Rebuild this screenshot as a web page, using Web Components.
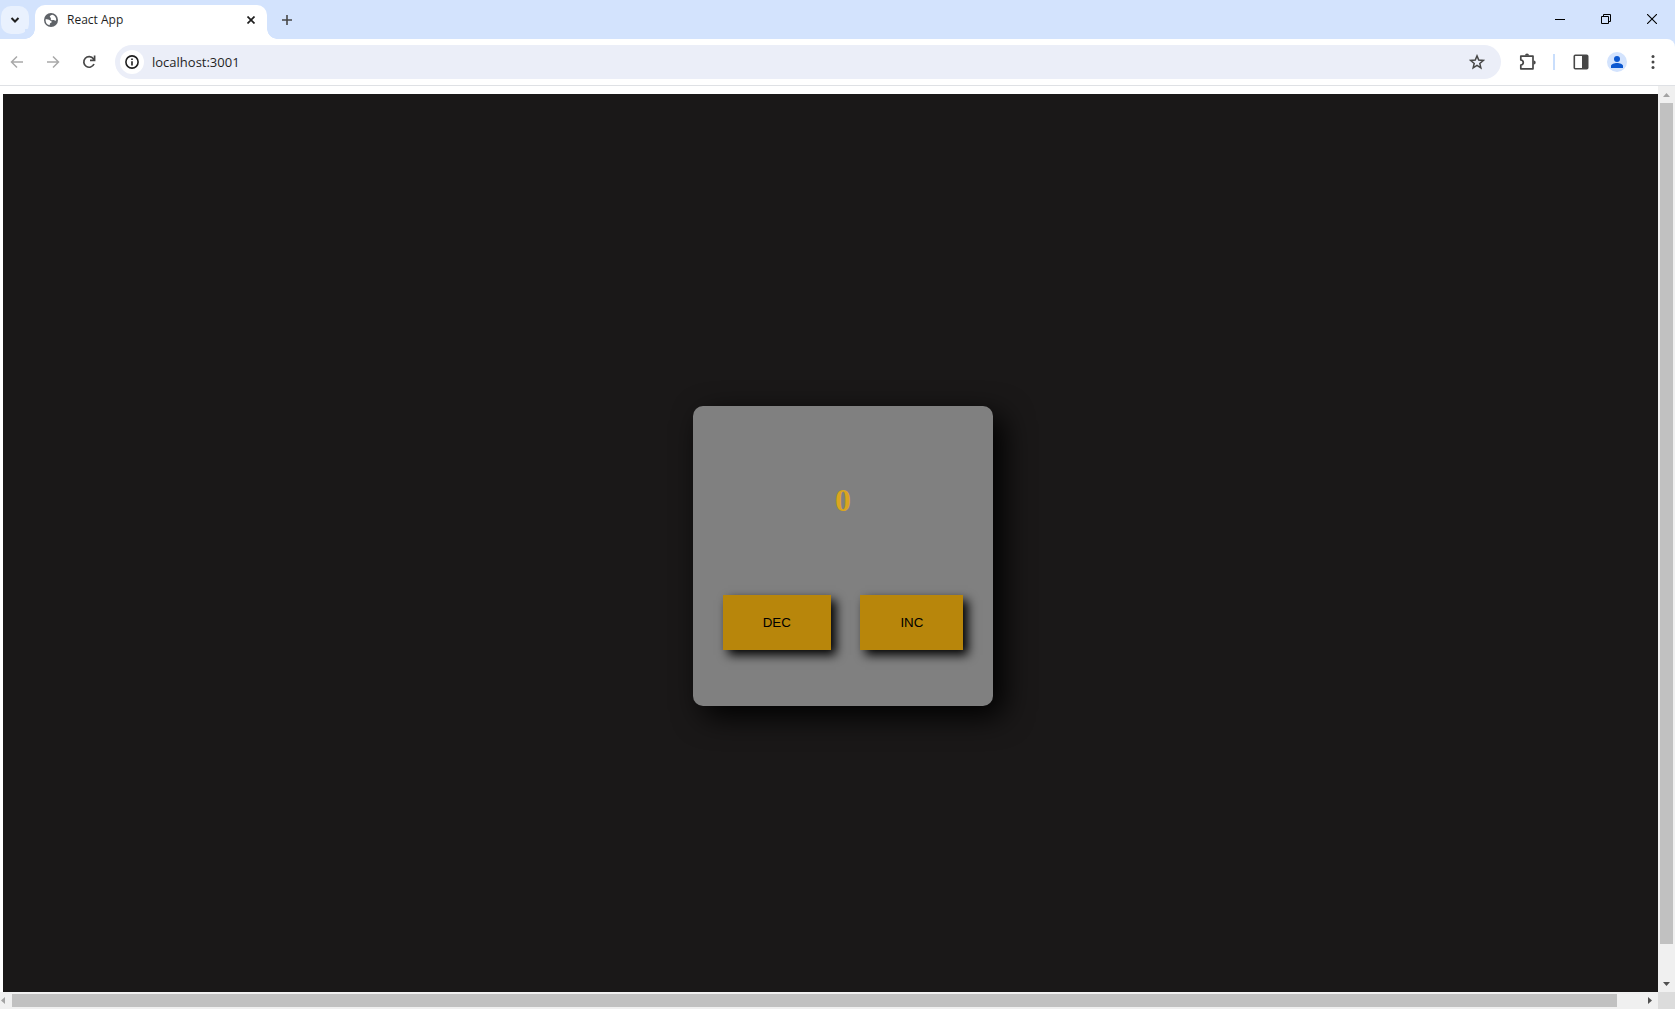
<!DOCTYPE html>
<html lang="en">
<head>
<meta charset="utf-8">
<title>React App</title>
<style>
html, body { height: 100%; margin: 0; }
body { overflow: hidden; background: #fff; }
</style>
</head>
<body>
<browser-window></browser-window>

<template id="window-template">
<style>
:host { display: flex; flex-direction: column; height: 100vh; background: #d3e3fd; }
</style>
<tab-strip><browser-tab>React App</browser-tab></tab-strip>
<nav-toolbar address="localhost:3001"></nav-toolbar>
<page-viewport><counter-page></counter-page></page-viewport>
</template>

<template id="strip-template">
<style>
:host { display: flex; align-items: center; height: 39px; background: #d3e3fd; }
button { display: flex; align-items: center; justify-content: center; border: 0; padding: 0; margin: 0; background: none; }
.search { width: 28px; height: 28px; margin: 0 6px 0 1px; border-radius: 10px; background: #e9f1fe; }
.add { width: 28px; height: 28px; margin-left: 6px; }
.controls { display: flex; align-self: flex-start; margin-left: auto; }
.controls button { width: 46px; height: 38px; }
svg { display: block; }
</style>
<button class="search" aria-label="Search tabs"><svg width="10" height="10" viewBox="0 0 10 10" fill="none" stroke="#1f1f1f" stroke-width="2"><path d="M1.500 3L5 6.500 8.500 3"/></svg></button>
<slot></slot>
<button class="add" aria-label="New tab"><svg width="12" height="12" viewBox="0 0 12 12" fill="none" stroke="#474747" stroke-width="1.6"><path d="M6 1v10M1 6h10"/></svg></button>
<div class="controls">
<button aria-label="Minimize"><svg width="10" height="10" viewBox="0 0 10 10"><path d="M0 5h10v1H0z"/></svg></button>
<button aria-label="Restore"><svg width="10" height="10" viewBox="0 0 10 10" fill="none" stroke="#000"><path d="M.5 2.5h7v7h-7zM2.500 2.500v-2h7v7h-2"/></svg></button>
<button aria-label="Close"><svg width="10" height="10" viewBox="0 0 10 10" fill="none" stroke="#000" stroke-width="1.1"><path d="M0 0l10 10M10 0L0 10"/></svg></button>
</div>
</template>

<template id="tab-template">
<style>
:host { position: relative; display: flex; align-items: center; align-self: flex-end; box-sizing: border-box; width: 232px; height: 34px; padding: 0 9px 5px; border-radius: 10px 10px 0 0; background: #fff; color: #1f1f1f; font: 12px/16px "Open Sans", "Noto Sans", sans-serif; }
:host::before, :host::after { content: ""; position: absolute; bottom: 0; width: 10px; height: 10px; }
:host::before { right: 100%; background: radial-gradient(circle at 0 0, #d3e3fd 9.500px, #fff 10px); }
:host::after { left: 100%; background: radial-gradient(circle at 100% 0, #d3e3fd 9.500px, #fff 10px); }
span { flex: 1; margin-left: 9px; }
button { display: flex; padding: 4px; border: 0; background: none; margin: 0 -1px 0 0; }
</style>
<svg width="14" height="14" viewBox="0 0 14 14"><circle cx="7" cy="7" r="7" fill="#5f6368"/><path d="M8.400 1.800c-1.200.4-2.600.9-2.600 1.900 0 .8 1.100.6 1.100 1.300 0 .8-.4 1.300.3 1.900.6.500 1.300.2 2.100.2.900 0 1.200.7 2 .7.500 0 .8-.3.900-.8a5.500 5.500 0 0 0-3.800-5.200zM1.600 6.200c1.600 0 3.400.1 4.200 1.100.6.800 1.900.6 1.900 1.600 0 .9-1.200.8-1.700 1.500-.3.500-.2 1.200-.3 1.800A5.500 5.500 0 0 1 1.600 6.200z" fill="#fff"/></svg>
<span><slot></slot></span>
<button aria-label="Close tab"><svg width="8" height="8" viewBox="0 0 8 8" fill="none" stroke="#1f1f1f" stroke-width="1.700"><path d="M.5.5l7 7M7.500.5l-7 7"/></svg></button>
</template>

<template id="toolbar-template">
<style>
:host { display: flex; align-items: center; box-sizing: border-box; height: 47px; padding: 0 12px 0 7px; border-bottom: 1px solid #dfe1e5; border-radius: 0 8px 0 0; background: #fff; }
button { display: flex; align-items: center; justify-content: center; flex: none; width: 20px; height: 28px; border: 0; padding: 0; margin: 0; background: none; }
svg { display: block; }
.nav { display: flex; gap: 16px; margin-right: 16px; }
.box { display: flex; align-items: center; flex: 1; box-sizing: border-box; height: 34px; padding: 0 14px 0 5px; border-radius: 17px; background: #ebeef8; }
.info { width: 24px; height: 24px; border-radius: 50%; background: #fff; }
input { flex: 1; min-width: 0; margin: 0 0 0 8px; padding: 0; border: 0; outline: 0; background: none; color: #1f1f1f; font: 13px/20px "Open Sans", "Noto Sans", sans-serif; }
.tools { display: flex; align-items: center; margin-left: 16px; }
.rule { width: 2px; height: 16px; margin: 0 16px; background: #c9defc; }
.avatar { margin: 0 16px; }
</style>
<div class="nav">
<button aria-label="Back"><svg width="14" height="14" viewBox="0 0 14 14" fill="none" stroke="#a9a9a9" stroke-width="1.500"><path d="M13 7H2M7 1.500L1.500 7 7 12.500"/></svg></button>
<button aria-label="Forward"><svg width="14" height="14" viewBox="0 0 14 14" fill="none" stroke="#a9a9a9" stroke-width="1.500"><path d="M1 7h11M7 1.500L12.500 7 7 12.500"/></svg></button>
<button aria-label="Reload"><svg width="14" height="14" viewBox="0 0 14 14" fill="none" stroke="#474747" stroke-width="1.700"><path d="M12 9a5.300 5.300 0 1 1-.6-5.200l1 1.200M12.600.6v4.700H8"/></svg></button>
</div>
<div class="box">
<button class="info" aria-label="Site information"><svg width="14" height="14" viewBox="0 0 14 14"><circle cx="7" cy="7" r="6.100" fill="none" stroke="#1f1f1f" stroke-width="1.600"/><path d="M6.200 6.200h1.600v4.200H6.200zM6.200 3.500h1.600v1.600H6.200z" fill="#1f1f1f"/></svg></button>
<input type="text" aria-label="Address">
<button aria-label="Bookmark this page"><svg width="16" height="16" viewBox="0 0 16 16" fill="none" stroke="#474747" stroke-width="1.500"><path d="M8 1.900l1.750 4.150 4.450.4-3.400 2.950 1.050 4.400L8 11.450 4.150 13.800l1.050-4.400-3.400-2.950 4.450-.4z"/></svg></button>
</div>
<div class="tools">
<button aria-label="Extensions"><svg width="18" height="18" viewBox="0 0 18 18"><path d="M2.800 3.100h12.200v12.700H2.800v-3.700c3.300-.6 3.300-4.600 0-5.200z" fill="none" stroke="#474747" stroke-width="1.700" stroke-linejoin="round"/><path d="M7 2.500a2 2 0 0 1 4 0zM15.700 7.500a2 2 0 0 1 0 4z" fill="#474747"/></svg></button>
<span class="rule"></span>
<button aria-label="Side panel"><svg width="16" height="16" viewBox="0 0 16 16"><rect x="1.300" y="1.300" width="13.400" height="13.400" rx="1" fill="none" stroke="#474747" stroke-width="1.600"/><path d="M9 1h6v14H9z" fill="#474747"/></svg></button>
<button class="avatar" aria-label="Profile"><svg width="20" height="20" viewBox="0 0 20 20"><circle cx="10" cy="10" r="10" fill="#d3e3fd"/><circle cx="10" cy="7" r="3" fill="#0b57d0"/><path d="M4 16v-2c0-2 3.500-3 6-3s6 1 6 3v2z" fill="#0b57d0"/></svg></button>
<button aria-label="Menu"><svg width="4" height="14" viewBox="0 0 4 14" fill="#474747"><circle cx="2" cy="1.600" r="1.500"/><circle cx="2" cy="7" r="1.500"/><circle cx="2" cy="12.400" r="1.500"/></svg></button>
</div>
</template>

<template id="viewport-template">
<style>
:host { flex: 1; min-height: 0; display: grid; grid-template: minmax(0, 1fr) 17px / minmax(0, 1fr) 17px; background: #fff; }
.view { overflow: hidden; padding: 8px 0 0 3px; }
.corner { background: #dcdcdc; }
</style>
<div class="view"><slot></slot></div>
<scroll-bar></scroll-bar>
<scroll-bar horizontal></scroll-bar>
<div class="corner"></div>
</template>

<template id="scroll-template">
<style>
:host { display: flex; flex-direction: column; align-items: center; background: #f0f0f0; }
:host([horizontal]) { flex-direction: row; }
.arrow { display: flex; align-items: center; justify-content: center; flex: none; width: 17px; height: 17px; }
:host([horizontal]) .start { width: 12px; justify-content: flex-start; }
.thumb { background: #c1c1c1; width: 13px; flex: 1; }
:host([horizontal]) .thumb { width: auto; height: 13px; }
.rest { flex: 0 0 31px; }
:host([horizontal]) .rest { flex-basis: 24px; }
.start path { fill: #a3a3a3; }
.end path { fill: #505050; }
svg { display: none; }
:host(:not([horizontal])) .v, :host([horizontal]) .h { display: block; }
</style>
<span class="arrow start"><svg class="v" width="7" height="4" viewBox="0 0 7 4"><path d="M3.500 0L7 4H0z"/></svg><svg class="h" width="5" height="7" viewBox="0 0 5 7"><path d="M5 0v7L1 3.500z"/></svg></span>
<span class="thumb"></span><span class="rest"></span>
<span class="arrow end"><svg class="v" width="7" height="4" viewBox="0 0 7 4"><path d="M0 0h7L3.500 4z"/></svg><svg class="h" width="4" height="7" viewBox="0 0 4 7"><path d="M0 0v7l4-3.500z"/></svg></span>
</template>

<template id="counter-template">
<style>
:host { display: flex; align-items: center; justify-content: center; width: calc(100% + 25px); height: calc(100% + 26px); background: #1a1818; }
.card { box-sizing: border-box; width: 300px; height: 300px; padding: 76px 0 56px; display: flex; flex-direction: column; justify-content: space-between; border-radius: 10px; background: #808080; box-shadow: 10px 10px 30px #000; }
h1 { margin: 0; text-align: center; font: bold 32px/37px "Liberation Serif", serif; color: goldenrod; }
.row { display: flex; justify-content: space-evenly; }
button { margin: 0; padding: 20px 40px; border: 0; background: darkgoldenrod; color: #000; font-family: "Liberation Sans", Arial, sans-serif; box-shadow: 5px 5px 10px #000; }
</style>
<div class="card">
<h1>0</h1>
<div class="row"><button class="dec">DEC</button><button class="inc">INC</button></div>
</div>
</template>

<script>
class Part extends HTMLElement {
  constructor() {
    super();
    this.attachShadow({ mode: "open" }).append(
      document.getElementById(this.constructor.template).content.cloneNode(true));
  }
}
customElements.define("tab-strip", class extends Part { static template = "strip-template"; });
customElements.define("browser-tab", class extends Part { static template = "tab-template"; });
customElements.define("nav-toolbar", class extends Part {
  static template = "toolbar-template";
  connectedCallback() { this.shadowRoot.querySelector("input").value = this.getAttribute("address"); }
});
customElements.define("scroll-bar", class extends Part { static template = "scroll-template"; });
customElements.define("page-viewport", class extends Part { static template = "viewport-template"; });
customElements.define("counter-page", class extends Part {
  static template = "counter-template";
  connectedCallback() {
    const root = this.shadowRoot, out = root.querySelector("h1");
    root.querySelector(".dec").onclick = () => { out.textContent = Number(out.textContent) - 1; };
    root.querySelector(".inc").onclick = () => { out.textContent = Number(out.textContent) + 1; };
  }
});
customElements.define("browser-window", class extends Part { static template = "window-template"; });
</script>
</body>
</html>
